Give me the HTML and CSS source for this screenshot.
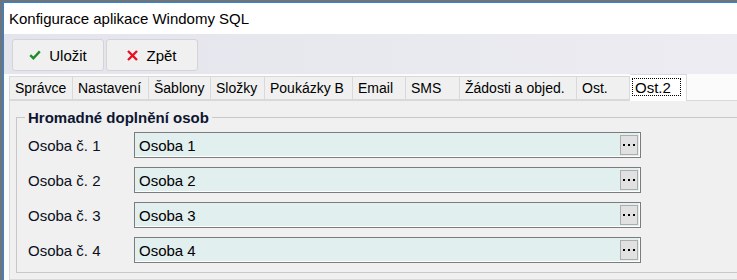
FILE: index.html
```html
<!DOCTYPE html>
<html lang="cs">
<head>
    <meta charset="UTF-8">
    <title>Konfigurace aplikace Windomy SQL</title>
    <link rel="stylesheet" href="styles.css">
</head>
<body>

    <div class="window">
        <div class="frame">
            <div class="titlebar">Konfigurace aplikace Windomy SQL</div>

            <div class="toolbar">
                <button class="tool-btn">
                    <svg class="icon" width="12" height="10" viewBox="0 0 12 10">
                        <path d="M1.2 5.2 L4.4 8.2 L10.8 1.4" fill="none" stroke="#1e8c2a" stroke-width="2.4"/>
                    </svg>
                    Uložit
                </button>
                <button class="tool-btn">
                    <svg class="icon" width="11" height="11" viewBox="0 0 11 11">
                        <path d="M1 1 L10 10 M10 1 L1 10" fill="none" stroke="#e81123" stroke-width="2.4"/>
                    </svg>
                    Zpět
                </button>
            </div>

            <div class="client">
                <div class="tabs">
                    <div class="tab">Správce</div>
                    <div class="tab">Nastavení</div>
                    <div class="tab">Šablony</div>
                    <div class="tab">Složky</div>
                    <div class="tab">Poukázky B</div>
                    <div class="tab">Email</div>
                    <div class="tab">SMS</div>
                    <div class="tab">Žádosti a objed.</div>
                    <div class="tab">Ost.</div>
                    <div class="tab active"><span class="focus">Ost.2</span></div>
                </div>

                <div class="page">
                    <fieldset class="group">
                        <legend>Hromadné doplnění osob</legend>

                        <div class="row">
                            <label>Osoba č. 1</label>
                            <div class="field">
                                <span class="value">Osoba 1</span>
                                <span class="more"><i></i><i></i><i></i></span>
                            </div>
                        </div>
                        <div class="row">
                            <label>Osoba č. 2</label>
                            <div class="field">
                                <span class="value">Osoba 2</span>
                                <span class="more"><i></i><i></i><i></i></span>
                            </div>
                        </div>
                        <div class="row">
                            <label>Osoba č. 3</label>
                            <div class="field">
                                <span class="value">Osoba 3</span>
                                <span class="more"><i></i><i></i><i></i></span>
                            </div>
                        </div>
                        <div class="row">
                            <label>Osoba č. 4</label>
                            <div class="field">
                                <span class="value">Osoba 4</span>
                                <span class="more"><i></i><i></i><i></i></span>
                            </div>
                        </div>
                    </fieldset>
                </div>
            </div>
        </div>
    </div>

</body>
</html>
```

FILE: styles.css
```css
body {
    margin: 0;
    padding: 0;
    width: 737px;
    height: 280px;
    overflow: hidden;
    font-family: 'Liberation Sans', Arial, sans-serif;
    color: #000;
    background-color: #fff;
}

.window {
    box-sizing: border-box;
    height: 280px;
    border-top: 2px solid #6e747c;
    border-left: 3px solid #6e747c;
    overflow: hidden;
}

.frame {
    box-sizing: border-box;
    height: 100%;
    border-top: 1px solid #2b87de;
    border-left: 1px solid #2b87de;
    background-color: #fff;
}

.titlebar {
    height: 31px;
    line-height: 31px;
    padding-left: 5px;
    font-size: 15px;
    color: #000;
}

.toolbar {
    display: flex;
    gap: 2px;
    height: 40px;
    box-sizing: border-box;
    padding: 5px 0 0 8px;
    background: linear-gradient(to right, #e4e4ec, #ececf2);
}

.tool-btn {
    display: flex;
    align-items: center;
    justify-content: center;
    gap: 8px;
    width: 92px;
    height: 32px;
    padding: 0;
    font-family: inherit;
    font-size: 15px;
    color: #000;
    background-color: #f0f0f0;
    border: 1px solid #d3d3d8;
    border-radius: 3px;
}

.client {
    padding-left: 5px;
    background-color: #fbfbfb;
}

.tabs {
    display: flex;
    align-items: flex-end;
    height: 26px;
    position: relative;
    z-index: 1;
}

.tab {
    box-sizing: border-box;
    height: 24px;
    line-height: 22px;
    padding-left: 5px;
    font-size: 14px;
    background-color: #f0f0f0;
    border: 1px solid #d9d9d9;
    border-left: none;
    white-space: nowrap;
}

.tab:first-child {
    border-left: 1px solid #d9d9d9;
}

.tab:nth-child(1) { width: 64px; }
.tab:nth-child(2) { width: 76px; }
.tab:nth-child(3) { width: 62px; }
.tab:nth-child(4) { width: 54px; }
.tab:nth-child(5) { width: 88px; }
.tab:nth-child(6) { width: 53px; }
.tab:nth-child(7) { width: 54px; }
.tab:nth-child(8) { width: 117px; }
.tab:nth-child(9) { width: 53px; }

.tab.active {
    width: 57px;
    height: 27px;
    margin-bottom: -1px;
    padding: 3px 0 0 2px;
    background-color: #fff;
    border-bottom: none;
}

.focus {
    display: block;
    width: 49px;
    height: 18px;
    line-height: 17px;
    padding-left: 2px;
    box-sizing: border-box;
    border: 1px dotted #000;
    font-size: 15px;
}

.page {
    box-sizing: border-box;
    height: 180px;
    background-color: #f0f0f0;
    border: 1px solid #d9d9d9;
    border-right: none;
}

.group {
    margin: 8px 0 0 6px;
    padding: 2px 0 9px 11px;
    border: 1px solid #c8c8c8;
    border-right: none;
    border-radius: 0;
}

.group legend {
    padding: 0 3px;
    margin-left: -3px;
    font-size: 15px;
    font-weight: bold;
    color: #0d1530;
}

.row {
    display: flex;
    align-items: center;
    height: 26px;
    margin-top: 9px;
}

.row:first-of-type {
    margin-top: 4px;
}

.row label {
    width: 106px;
    font-size: 15px;
    color: #0a0f20;
}

.field {
    display: flex;
    align-items: center;
    justify-content: space-between;
    box-sizing: border-box;
    width: 507px;
    height: 26px;
    padding: 0 2px 0 4px;
    background-color: #e2efef;
    border: 1px solid #7c7c7c;
    box-shadow: inset -1px -1px 0 #fff;
}

.value {
    font-size: 15px;
    color: #000;
}

.more {
    display: flex;
    align-items: center;
    justify-content: center;
    gap: 3px;
    box-sizing: border-box;
    width: 18px;
    height: 20px;
    background-color: #e1e1e1;
    border: 1px solid #adadad;
}

.more i {
    display: block;
    width: 2px;
    height: 2px;
    background-color: #000;
}
```
